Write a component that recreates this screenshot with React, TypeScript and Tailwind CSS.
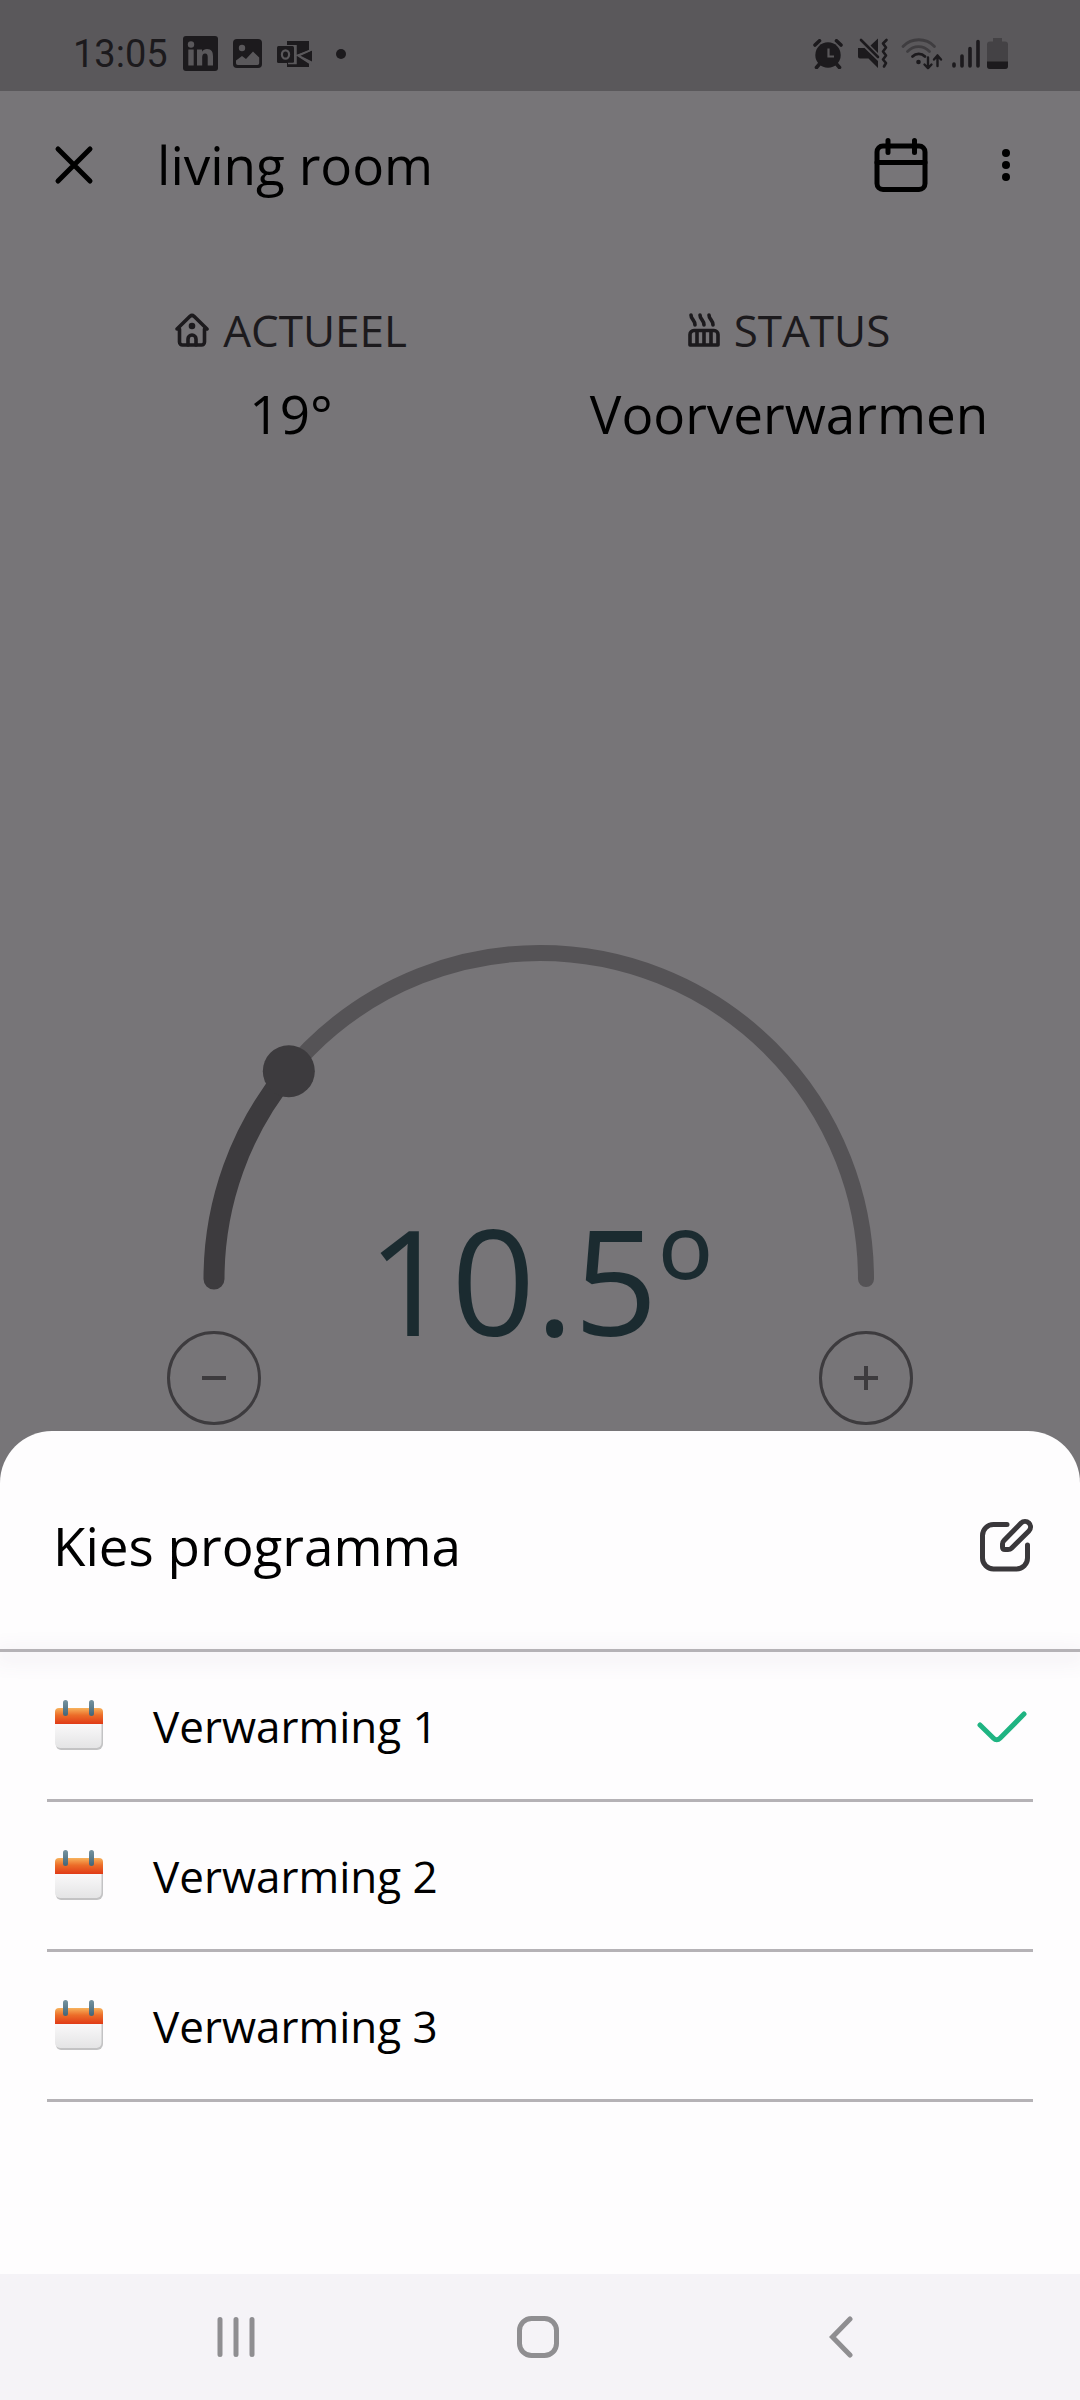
import { useState } from "react";

const MIN_TEMP = 5;
const MAX_TEMP = 30;
const PROGRAMS = ["Verwarming 1", "Verwarming 2", "Verwarming 3"];

function StatusBar() {
  return (
    <div className="flex h-[91px] items-center bg-[#5a585b] pr-[72px] pl-[73px] pt-[16px] text-[#1c1a1d]">
      <span className="font-[Roboto,sans-serif] text-[38px] leading-[44px]">13:05</span>
      <svg className="ml-[15px] h-[35px] w-[35px]" viewBox="0 0 35 35" aria-label="LinkedIn">
        <rect width="35" height="35" rx="3" fill="currentColor" />
        <g fill="#5a585b">
          <circle cx="8" cy="8.5" r="3.2" />
          <rect x="5.3" y="13.5" width="5.4" height="16" />
          <path d="M14 13.5h5v2.3c1-1.700 2.800-2.700 5-2.700 4.600 0 6 3 6 7.200v9.200h-5.300v-8.200c0-2.300-.6-3.900-2.600-3.900s-2.900 1.600-2.900 3.900v8.200H14z" />
        </g>
      </svg>
      <svg className="ml-[15px] h-[29px] w-[29px]" viewBox="0 0 29 29" aria-label="Afbeelding">
        <rect width="29" height="29" rx="4" fill="currentColor" />
        <circle cx="9" cy="9" r="3.200" fill="#5a585b" />
        <path d="M3 21.500 9 17l4 3 7-7.500 6.200 6v5.800a1.800 1.800 0 0 1-1.800 1.800H4.800A1.800 1.800 0 0 1 3 24.300z" fill="#5a585b" />
      </svg>
      <svg className="ml-[15px] h-[26px] w-[36px]" viewBox="0 0 36 26" aria-label="Outlook">
        <path d="M10 0h22v9.500L19.500 14 32 22v4H10v-4h9V4h-9z" fill="currentColor" />
        <path d="m35 9.500-11.500 5.200L35 20.500z" fill="currentColor" />
        <rect y="5" width="17" height="17" rx="1.500" fill="currentColor" />
        <path d="M19 4v18.500h-8M35 8.500 20.500 14.500 34 23" fill="none" stroke="#5a585b" strokeWidth="1.500" />
        <ellipse cx="8.500" cy="13.500" rx="3.600" ry="4.200" fill="none" stroke="#5a585b" strokeWidth="2.200" />
      </svg>
      <span className="ml-[23px] h-[10px] w-[10px] rounded-full bg-[#1c1a1d]" />

      <div className="ml-auto flex items-center">
        <svg className="h-[30px] w-[30px]" viewBox="0 0 30 30" aria-label="Wekker">
          <circle cx="15" cy="16" r="12.700" fill="currentColor" />
          <path d="M2 6l4.500-4.200M28 6l-4.500-4.200M6.500 25 3.500 28.500M23.500 25l3 3.500" stroke="currentColor" strokeWidth="3.600" strokeLinecap="round" />
          <path d="M15.500 9.500v8h5.500" fill="none" stroke="#5a585b" strokeWidth="2.200" />
        </svg>
        <svg className="ml-[15px] h-[31px] w-[31px]" viewBox="0 0 31 31" aria-label="Geluid uit, trillen">
          <path d="M12.500 7.500 20 .5v14.500zM0 10h6.500L20 23v7l-9.500-9.500H2a2 2 0 0 1-2-2z" fill="currentColor" />
          <path d="M3 2l17 17" stroke="currentColor" strokeWidth="2.600" strokeLinecap="round" />
          <path d="M28.500 2l-3.500 3.500 3 4-3 4 3 4-3 4 3 3.500-2 3.500" fill="none" stroke="currentColor" strokeWidth="2.600" strokeLinecap="round" strokeLinejoin="round" />
        </svg>
        <svg className="ml-[12px] h-[32px] w-[42px]" viewBox="0 0 42 32" fill="none" strokeLinecap="round" aria-label="Wifi">
          <path d="M2 8.500c8.500-9 23-9 31.500 0M6.500 13.500c6.500-6.500 15.500-6.500 22 0" stroke="#3f3d40" strokeWidth="2.800" />
          <path d="M11.500 18.500c3.500-3.500 9-3.500 12.500 0" stroke="currentColor" strokeWidth="2.800" />
          <circle cx="17.500" cy="24" r="2.300" fill="currentColor" />
          <path d="M27 19.500v10.500M23.500 26.500l3.500 3.700 3.500-3.700M36.500 28V17.500M33 21.500l3.500-4 3.500 4" stroke="currentColor" strokeWidth="2.400" strokeLinejoin="round" />
        </svg>
        <svg className="ml-[9px] h-[30px] w-[28px]" viewBox="0 0 28 30" stroke="currentColor" strokeWidth="3.600" strokeLinecap="round" aria-label="Signaal">
          <path d="M2 25v2M10 17v10M18 9.500V27M26 2.500V27" />
        </svg>
        <svg className="ml-[7px] h-[32px] w-[21px]" viewBox="0 0 21 32" aria-label="Batterij">
          <path d="M6 0h9v3.500h3a3 3 0 0 1 3 3V28a3 3 0 0 1-3 3H3a3 3 0 0 1-3-3V6.500a3 3 0 0 1 3-3h3z" fill="#444245" />
          <path d="M0 23.500h21V28a3 3 0 0 1-3 3H3a3 3 0 0 1-3-3z" fill="currentColor" />
        </svg>
      </div>
    </div>
  );
}

function Header() {
  return (
    <header className="flex items-center pt-[38px] pb-[37px] pr-[66px] pl-[50px] text-black">
      <button type="button" aria-label="Sluiten">
        <svg className="h-[48px] w-[48px]" viewBox="0 0 48 48" stroke="currentColor" strokeWidth="5" strokeLinecap="round">
          <path d="M8 8l32 32M40 8L8 40" />
        </svg>
      </button>
      <h1 className="ml-[59px] text-[53px] leading-[72px]">living room</h1>
      <button type="button" aria-label="Programma" className="ml-auto">
        <svg className="h-[54px] w-[54px]" viewBox="0 0 54 54" fill="none" stroke="currentColor" strokeWidth="5" strokeLinecap="round">
          <rect x="3" y="8" width="48" height="43.500" rx="6" />
          <path d="M3 24.500h48M14 2.500v12M40.500 2.500v12" />
        </svg>
      </button>
      <button type="button" aria-label="Meer opties" className="ml-[70px]">
        <svg className="h-[36px] w-[16px]" viewBox="0 0 16 36" fill="currentColor">
          <circle cx="8" cy="6" r="4" />
          <circle cx="8" cy="18" r="4" />
          <circle cx="8" cy="30" r="4" />
        </svg>
      </button>
    </header>
  );
}

function HouseIcon() {
  return (
    <svg className="h-[34px] w-[34px]" viewBox="0 0 34 34" fill="none" stroke="currentColor" strokeWidth="3.600" strokeLinecap="round" strokeLinejoin="round">
      <path d="M4.500 16H2L15 3.300a3 3 0 0 1 4 0L32 16h-2.500v13a3 3 0 0 1-3 3h-19a3 3 0 0 1-3-3z" />
      <path d="M13 32v-6a4 4 0 0 1 8 0v6" />
      <circle cx="17" cy="13" r="3.300" fill="currentColor" stroke="none" />
    </svg>
  );
}

function RadiatorIcon() {
  return (
    <svg className="h-[34px] w-[32px]" viewBox="0 0 32 34" fill="none" stroke="currentColor" strokeWidth="3.600" strokeLinecap="round" strokeLinejoin="round">
      <path d="M3 2c0 4.500 4 5 4 10M12 2c0 4.500 4 5 4 10M21 2c0 4.500 4 5 4 10" />
      <path d="M2 32V21.500a4 4 0 0 1 4-4h20a4 4 0 0 1 4 4V32zM9 18v14M16 18v14M23 18v14" />
    </svg>
  );
}

function Stat({ icon, label, value }: { icon: React.ReactNode; label: string; value: string }) {
  return (
    <div className="flex flex-1 flex-col items-center">
      <dt className="flex items-center gap-[14px] text-[44px] leading-[56px] text-[#1c1a1d]">
        {icon}
        {label}
      </dt>
      <dd className="mt-5 text-[53px] leading-[72px] text-black">{value}</dd>
    </div>
  );
}

function Dial({ value, onChange }: { value: number; onChange: (v: number) => void }) {
  const cx = 373;
  const cy = 334;
  const r = 326;
  const angle = Math.PI * ((value - MIN_TEMP) / (MAX_TEMP - MIN_TEMP));
  const x = cx - r * Math.cos(angle);
  const y = cy - r * Math.sin(angle);
  const step = (d: number) => onChange(Math.min(MAX_TEMP, Math.max(MIN_TEMP, value + d)));
  const round =
    "flex h-[94px] w-[94px] items-center justify-center rounded-full border-[3px] border-[#3d3b3e] text-[#3d3b3e]";

  return (
    <section className="relative mx-auto mt-auto w-full max-w-[746px] pb-[6px]">
      <svg className="block w-full overflow-visible" viewBox="0 0 746 344" fill="none" strokeLinecap="round" aria-hidden="true">
        <path d={`M${cx - r} ${cy}A${r} ${r} 0 0 1 ${cx + r} ${cy}`} stroke="#555356" strokeWidth="16" />
        <path d={`M${cx - r} ${cy}A${r} ${r} 0 0 1 ${x} ${y}`} stroke="#3d3b3e" strokeWidth="21" />
        <circle cx={x} cy={y} r="26" fill="#3d3b3e" />
      </svg>
      <input
        type="range"
        aria-label="Temperatuur"
        className="sr-only"
        min={MIN_TEMP}
        max={MAX_TEMP}
        step={0.5}
        value={value}
        onChange={(e) => onChange(Number(e.target.value))}
      />
      <output className="absolute inset-x-0 bottom-16 text-center text-[147px] leading-[176px] text-[#1b2b30]">
        {value.toFixed(1)}º
      </output>
      <div className="relative mt-[42px] flex justify-between">
        <button type="button" aria-label="Lager" className={round} onClick={() => step(-0.5)}>
          <svg className="h-[24px] w-[24px]" viewBox="0 0 24 24" stroke="currentColor" strokeWidth="4">
            <path d="M0 12h24" />
          </svg>
        </button>
        <button type="button" aria-label="Hoger" className={round} onClick={() => step(0.5)}>
          <svg className="h-[24px] w-[24px]" viewBox="0 0 24 24" stroke="currentColor" strokeWidth="4">
            <path d="M0 12h24M12 0v24" />
          </svg>
        </button>
      </div>
    </section>
  );
}

function CalendarArt() {
  return (
    <svg className="h-[52px] w-[48px] shrink-0" viewBox="0 0 48 52" aria-hidden="true">
      <defs>
        <linearGradient id="calTop" x1="0" y1="0" x2="0" y2="1">
          <stop offset="0" stopColor="#f7b25c" />
          <stop offset="0.45" stopColor="#ec6d29" />
          <stop offset="1" stopColor="#e03a16" />
        </linearGradient>
        <linearGradient id="calPage" x1="0" y1="0" x2="0" y2="1">
          <stop offset="0" stopColor="#fbfafb" />
          <stop offset="1" stopColor="#e4e4e5" />
        </linearGradient>
        <linearGradient id="calRing" x1="0" y1="0" x2="0" y2="1">
          <stop offset="0" stopColor="#7593a0" />
          <stop offset="1" stopColor="#436577" />
        </linearGradient>
      </defs>
      <path d="M1 22h47v22a6 6 0 0 1-6 6H6a5 5 0 0 1-5-5z" fill="#c3c3c4" />
      <path d="M0 22h46.500v21a5 5 0 0 1-5 5H5a5 5 0 0 1-5-5z" fill="url(#calPage)" />
      <path d="M0 24V12a4 4 0 0 1 4-4h40a4 4 0 0 1 4 4v12z" fill="url(#calTop)" />
      <rect x="8" y="0" width="5" height="16" rx="2.500" fill="url(#calRing)" />
      <rect x="34" y="0" width="5" height="16" rx="2.500" fill="url(#calRing)" />
    </svg>
  );
}

function ProgramSheet() {
  const [selected, setSelected] = useState(PROGRAMS[0]);
  return (
    <section aria-labelledby="sheet-title" className="rounded-t-[52px] bg-[#fefdfe] pb-[172px]">
      <div className="flex items-center justify-between pt-[79px] pr-[44px] pb-[67px] pl-[53px]">
        <h2 id="sheet-title" className="text-[53px] leading-[72px] text-black">
          Kies programma
        </h2>
        <button type="button" aria-label="Programma's bewerken" className="text-[#3a383b]">
          <svg className="h-[58px] w-[58px]" viewBox="0 0 58 58" fill="none" stroke="currentColor" strokeWidth="5" strokeLinecap="round" strokeLinejoin="round">
            <path d="M29 7.500H15.500a11 11 0 0 0-11 11V41a11 11 0 0 0 11 11h23a11 11 0 0 0 11-11V28" />
            <path d="M43.100 6.100a5.500 5.500 0 0 1 7.800 7.800L33.500 31.200c-1 1-2.200 1.300-3.500 1.300h-3c-1.700 0-2.500-.8-2.500-2.500v-3c0-1.300.5-2.500 1.500-3.500z" />
          </svg>
        </button>
      </div>
      <div className="h-[3px] bg-[#b5b2b6] shadow-[0_5px_20px_6px_rgba(110,80,130,0.07)]" />
      <div role="radiogroup" aria-labelledby="sheet-title" className="mx-[47px]">
        {PROGRAMS.map((name) => (
          <label key={name} className="relative flex h-[150px] items-center border-b-[3px] border-[#b5b2b6] pr-[5px] pl-[8px]">
            <input
              type="radio"
              name="program"
              className="sr-only"
              checked={selected === name}
              onChange={() => setSelected(name)}
            />
            <CalendarArt />
            <span className="ml-[50px] text-[44px] leading-[56px] text-black">{name}</span>
            {selected === name && (
              <svg className="ml-auto h-[36px] w-[52px]" viewBox="0 0 52 36" fill="none" stroke="#1fb482" strokeWidth="5" strokeLinecap="round" strokeLinejoin="round" aria-hidden="true">
                <path d="M4 17 17.500 30.300c2 2 4.500 2 6.500 0L48 6" />
              </svg>
            )}
          </label>
        ))}
      </div>
    </section>
  );
}

function NavBar() {
  const item = "flex flex-1 items-center justify-center";
  return (
    <nav className="flex h-[126px] bg-[#f5f3f7] pr-[88px] pl-[85px] text-[#8f8e91]">
      <button type="button" aria-label="Recente apps" className={item}>
        <svg className="h-[42px] w-[42px]" viewBox="0 0 42 42" stroke="currentColor" strokeWidth="5" strokeLinecap="round">
          <path d="M5 3.500v35M21 3.500v35M37 3.500v35" />
        </svg>
      </button>
      <button type="button" aria-label="Startscherm" className={item}>
        <svg className="h-[42px] w-[42px]" viewBox="0 0 42 42" fill="none" stroke="currentColor" strokeWidth="5">
          <rect x="2.500" y="2.500" width="37" height="37" rx="12" />
        </svg>
      </button>
      <button type="button" aria-label="Terug" className={item}>
        <svg className="h-[42px] w-[24px]" viewBox="0 0 24 42" fill="none" stroke="currentColor" strokeWidth="5" strokeLinecap="round">
          <path d="M21 3 3.500 21 21 39" />
        </svg>
      </button>
    </nav>
  );
}

export default function App() {
  const [temp, setTemp] = useState(10.5);
  return (
    <div className="flex min-h-screen flex-col bg-[#777578] font-['Open_Sans',sans-serif]">
      <StatusBar />
      <Header />
      <dl className="flex px-[42px] pt-16 pb-8">
        <Stat icon={<HouseIcon />} label="ACTUEEL" value="19°" />
        <Stat icon={<RadiatorIcon />} label="STATUS" value="Voorverwarmen" />
      </dl>
      <Dial value={temp} onChange={setTemp} />
      <ProgramSheet />
      <NavBar />
    </div>
  );
}
